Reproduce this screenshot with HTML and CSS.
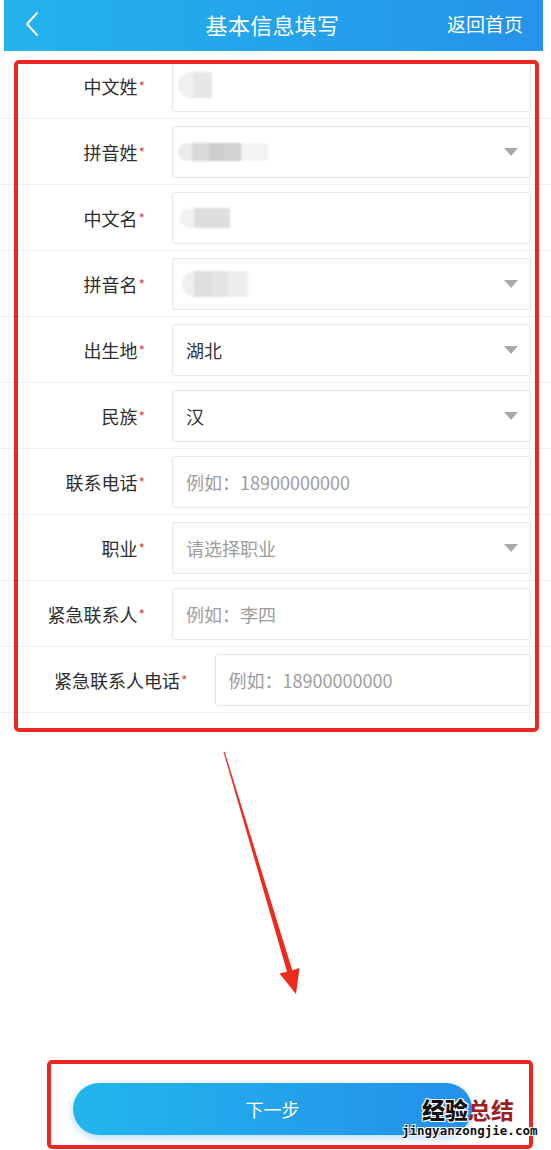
FILE: index.html
```html
<!DOCTYPE html>
<html lang="zh-CN">
<head>
  <meta charset="UTF-8" />
  <meta name="viewport" content="width=device-width, initial-scale=1.0"/>
  <title>基本信息填写</title>
  <link rel="stylesheet" href="styles.css">
</head>
<body>
  <div class="page">
    <div id="head">
      <svg class="back" width="16" height="26" viewBox="0 0 16 26">
        <polyline points="13,2 3,13 13,24" fill="none" stroke="#fff" stroke-width="2" stroke-linecap="round" stroke-linejoin="round"/>
      </svg>
      <h2>基本信息填写</h2>
      <span class="home">返回首页</span>
    </div>

    <form class="info-form">
      <div class="row">
        <label class="label">中文姓<i>*</i></label>
        <div class="field">
          <span class="blur blur-a"></span>
        </div>
      </div>
      <div class="row">
        <label class="label">拼音姓<i>*</i></label>
        <div class="field select">
          <span class="blur blur-b"></span>
          <span class="caret"></span>
        </div>
      </div>
      <div class="row">
        <label class="label">中文名<i>*</i></label>
        <div class="field">
          <span class="blur blur-c"></span>
        </div>
      </div>
      <div class="row">
        <label class="label">拼音名<i>*</i></label>
        <div class="field select">
          <span class="blur blur-d"></span>
          <span class="caret"></span>
        </div>
      </div>
      <div class="row">
        <label class="label">出生地<i>*</i></label>
        <div class="field select">
          <span class="value">湖北</span>
          <span class="caret"></span>
        </div>
      </div>
      <div class="row">
        <label class="label">民族<i>*</i></label>
        <div class="field select">
          <span class="value">汉</span>
          <span class="caret"></span>
        </div>
      </div>
      <div class="row">
        <label class="label">联系电话<i>*</i></label>
        <div class="field">
          <span class="hint">例如：18900000000</span>
        </div>
      </div>
      <div class="row">
        <label class="label">职业<i>*</i></label>
        <div class="field select">
          <span class="hint">请选择职业</span>
          <span class="caret"></span>
        </div>
      </div>
      <div class="row">
        <label class="label">紧急联系人<i>*</i></label>
        <div class="field">
          <span class="hint">例如：李四</span>
        </div>
      </div>
      <div class="row row-wide">
        <label class="label">紧急联系人电话<i>*</i></label>
        <div class="field">
          <span class="hint">例如：18900000000</span>
        </div>
      </div>
    </form>

    <div class="footer">
      <button type="button" class="next">下一步</button>
    </div>
  </div>

  <!-- annotations drawn on top of the screenshot -->
  <div class="mark mark-form"></div>
  <div class="mark mark-btn"></div>
  <svg class="arrow" width="551" height="1150" viewBox="0 0 551 1150">
    <polygon points="223.5,752 224.6,751.8 292.3,970.2 299.5,968 296,994 279.5,973.5 287,971.8" fill="#ee2a1e"/>
  </svg>
  <div class="watermark">
    <div class="wm-title"><b>经验</b><em>总结</em></div>
    <div class="wm-url">jingyanzongjie.com</div>
  </div>
</body>
</html>
```

FILE: styles.css
```css
body {
  margin: 0;
  background: #fff;
  font-family: "Noto Sans CJK SC", "Noto Sans", sans-serif;
  color: #333;
}

.page {
  width: 551px;
  min-height: 1150px;
  display: flex;
  flex-direction: column;
}

#head {
  height: 51px;
  margin: 0 8px 2px 4px;
  background: linear-gradient(to right, #23b3ec, #2593ea);
  display: flex;
  align-items: center;
  justify-content: space-between;
  padding: 0 20px 4px 20px;
  box-sizing: border-box;
  color: #fff;
}

#head h2 {
  margin: 0 0 0 58px;
  font-size: 22px;
  font-weight: normal;
  letter-spacing: 0.3px;
}

.back {
  display: block;
}

.home {
  font-size: 19px;
}

.info-form {
  display: flex;
  flex-direction: column;
}

.row {
  height: 66px;
  display: flex;
  align-items: center;
  padding: 0 20px 0 45px;
  border-bottom: 1px solid #eeeeee;
  box-sizing: border-box;
}

.row-wide {
  padding-left: 54px;
}

.label {
  min-width: 100px;
  text-align: right;
  font-size: 18px;
  color: #2e2e2e;
  margin-right: 27px;
  white-space: nowrap;
}

.label i {
  font-style: normal;
  font-size: 14px;
  color: #d0494b;
  margin-left: 1px;
  position: relative;
  top: -2px;
}

.field {
  flex: 1;
  height: 52px;
  border: 1px solid #e6e6e6;
  border-radius: 3px;
  display: flex;
  align-items: center;
  padding: 0 12px 0 13px;
  box-sizing: border-box;
  font-size: 18px;
}

.value {
  color: #333;
}

.hint {
  color: #9d9d9d;
}

.caret {
  margin-left: auto;
  width: 0;
  height: 0;
  border-left: 7px solid transparent;
  border-right: 7px solid transparent;
  border-top: 8px solid #a9a9a9;
}

.blur {
  display: block;
  filter: blur(0.8px);
  margin-left: -8px;
}

.blur-a {
  width: 34px;
  height: 26px;
  border-radius: 13px 2px 0 13px;
  background: linear-gradient(to right, #efefef 0 45%, #e6e6e6 45%);
  margin-top: -2px;
}

.blur-b {
  width: 90px;
  height: 18px;
  border-radius: 9px 0 0 9px;
  background: linear-gradient(to right, #ececec 0 16%, #d9d9d9 16% 34%, #cdcdcd 34% 52%, #d2d2d2 52% 70%, #f5f5f5 70%);
}

.blur-c {
  width: 50px;
  height: 20px;
  border-radius: 10px 2px 2px 10px;
  background: linear-gradient(to right, #f2f2f2 0 28%, #dddddd 28%);
  margin-left: -6px;
}

.blur-d {
  width: 66px;
  height: 26px;
  border-radius: 13px 0 0 13px;
  background: linear-gradient(to right, #efefef 0 18%, #dedede 18% 45%, #e4e4e4 45% 70%, #eeeeee 70%);
  margin-left: -4px;
}

.footer {
  margin-top: auto;
  padding: 0 79px 15px 73px;
}

.next {
  width: 100%;
  height: 52px;
  border: none;
  border-radius: 26px;
  background: linear-gradient(to right, #22b6ec, #2490ea);
  color: #fff;
  font-family: "Noto Sans CJK SC", sans-serif;
  font-size: 18px;
  box-shadow: 0 3px 8px rgba(36, 150, 234, 0.35);
}

.mark {
  position: absolute;
  border: 4px solid #ea2820;
  border-radius: 5px;
  box-sizing: border-box;
}

.mark-form {
  left: 14px;
  top: 60px;
  width: 525px;
  height: 672px;
}

.mark-btn {
  left: 47px;
  top: 1060px;
  width: 486px;
  height: 89px;
}

.arrow {
  position: absolute;
  left: 0;
  top: 0;
  pointer-events: none;
}

.watermark {
  position: absolute;
  left: 402px;
  top: 1094px;
  width: 140px;
  text-align: center;
}

.wm-title {
  font-size: 23px;
  font-weight: bold;
  line-height: 30px;
  margin-left: -8px;
}

.wm-title b {
  color: #111;
  text-shadow: -1px -1px 0 #fff, 1px -1px 0 #fff, -1px 1px 0 #fff, 1px 1px 0 #fff;
}

.wm-title em {
  font-style: normal;
  color: #9a1f1f;
}

.wm-url {
  font-family: "DejaVu Sans Mono", monospace;
  font-weight: bold;
  font-size: 12.5px;
  line-height: 14px;
  color: #111;
  text-shadow: -1px -1px 0 #fff, 1px -1px 0 #fff, -1px 1px 0 #fff, 1px 1px 0 #fff;
  text-align: left;
}
```
